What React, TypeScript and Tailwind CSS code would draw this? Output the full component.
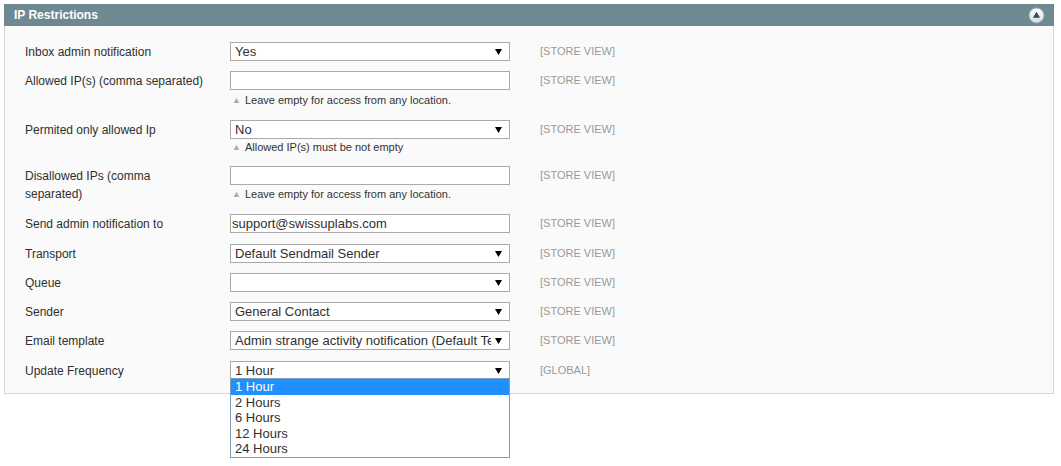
import React from "react";

type Row = {
  label: React.ReactNode;
  kind: "select" | "text";
  value?: string;
  note?: string;
  noteH?: string;
  gap?: string;
  scope: string;
};

const rows: Row[] = [
  { label: "Inbox admin notification", kind: "select", value: "Yes", scope: "[STORE VIEW]" },
  {
    label: "Allowed IP(s) (comma separated)",
    kind: "text",
    note: "Leave empty for access from any location.",
    noteH: "h-[20px] leading-[20px]",
    scope: "[STORE VIEW]",
  },
  {
    label: "Permited only allowed Ip",
    kind: "select",
    value: "No",
    note: "Allowed IP(s) must be not empty",
    noteH: "h-[17px] leading-[17px]",
    scope: "[STORE VIEW]",
  },
  {
    label: (
      <>
        Disallowed IPs (comma
        <br />
        separated)
      </>
    ),
    kind: "text",
    note: "Leave empty for access from any location.",
    noteH: "h-[19px] leading-[19px]",
    scope: "[STORE VIEW]",
  },
  { label: "Send admin notification to", kind: "text", value: "support@swissuplabs.com", scope: "[STORE VIEW]", gap: "mb-[1px]" },
  { label: "Transport", kind: "select", value: "Default Sendmail Sender", scope: "[STORE VIEW]" },
  { label: "Queue", kind: "select", value: "", scope: "[STORE VIEW]" },
  { label: "Sender", kind: "select", value: "General Contact", scope: "[STORE VIEW]" },
  {
    label: "Email template",
    kind: "select",
    value: "Admin strange activity notification (Default Template from Locale)",
    scope: "[STORE VIEW]",
    gap: "mb-[1px]",
  },
];

const hours = ["1 Hour", "2 Hours", "6 Hours", "12 Hours", "24 Hours"];

function Arrow() {
  return (
    <svg width="7" height="6" viewBox="0 0 7 6" className="mr-[7px] shrink-0">
      <path d="M0 0 H7 L3.5 6 Z" fill="#000" />
    </svg>
  );
}

function Field({ kind, value }: { kind: Row["kind"]; value?: string }) {
  if (kind === "text") {
    return (
      <div className="h-[19px] w-[280px] border border-[#aaaaaa] bg-white pl-[1px] text-[13px] leading-[17px] text-[#2f2f2f]">
        {value}
      </div>
    );
  }
  return (
    <div className="flex h-[19px] w-[280px] items-center border border-[#aaaaaa] bg-white text-[13px] leading-[17px] text-[#2f2f2f]">
      <div className="mr-[4px] min-w-0 flex-1 overflow-hidden whitespace-nowrap pl-[4px]">{value}</div>
      <Arrow />
    </div>
  );
}

function CollapseIcon() {
  return (
    <svg width="17" height="17" viewBox="0 0 17 17">
      <defs>
        <linearGradient id="cg" x1="0" y1="0" x2="0" y2="1">
          <stop offset="0" stopColor="#ffffff" />
          <stop offset="1" stopColor="#d3dcdf" />
        </linearGradient>
      </defs>
      <circle cx="8.5" cy="8.5" r="7.5" fill="url(#cg)" stroke="#9aaeb5" strokeWidth="1" />
      <path d="M8.5 4.8 L12 10.8 L5 10.8 Z" fill="#2c4b57" />
    </svg>
  );
}

export default function App() {
  return (
    <div className="min-h-screen bg-white pl-[4px] pt-[4px] font-['Liberation_Sans',Arial,sans-serif]">
      <div className="w-[1050px]">
        <div className="flex h-[22px] items-center justify-between bg-[#6f8992] pl-[10px] pr-[9px]">
          <span className="text-[12px] font-bold text-white">IP Restrictions</span>
          <CollapseIcon />
        </div>
        <div className="border border-t-0 border-[#d6d6d6] bg-[#fafafa] pb-[13px] pt-[16px]">
          <div className="flex flex-col gap-[10px]">
            {rows.map((r, i) => (
              <div key={i} className={`flex items-start ${r.gap ?? ""}`}>
                <div className="w-[225px] shrink-0 pl-[20px] pt-[1px] text-[12px] leading-[18px] text-[#2f2f2f]">
                  {r.label}
                </div>
                <div className="w-[280px] shrink-0">
                  <Field kind={r.kind} value={r.value} />
                  {r.note && (
                    <div className={`flex items-center pl-[2px] text-[11px] text-[#333333] ${r.noteH}`}>
                      <span className="mr-[4px] text-[9px] text-[#aaaaaa]">▲</span>
                      {r.note}
                    </div>
                  )}
                </div>
                <div className="ml-[30px] pt-[1px] text-[11px] leading-[17px] text-[#999999]">{r.scope}</div>
              </div>
            ))}
            <div className="flex items-start">
              <div className="w-[225px] shrink-0 pl-[20px] pt-[1px] text-[12px] leading-[18px] text-[#2f2f2f]">
                Update Frequency
              </div>
              <div className="relative w-[280px] shrink-0">
                <Field kind="select" value="1 Hour" />
                <div className="absolute left-0 top-[17px] z-10 w-[280px] border border-[#7f9db9] bg-white text-[13px] text-[#2f2f2f]">
                  {hours.map((h, i) => (
                    <div
                      key={h}
                      className={`h-[15.6px] pl-[4px] leading-[15.6px] ${i === 0 ? "bg-[#1e90ff] text-white" : ""}`}
                    >
                      {h}
                    </div>
                  ))}
                </div>
              </div>
              <div className="ml-[30px] pt-[1px] text-[11px] leading-[17px] text-[#999999]">[GLOBAL]</div>
            </div>
          </div>
        </div>
      </div>
    </div>
  );
}
